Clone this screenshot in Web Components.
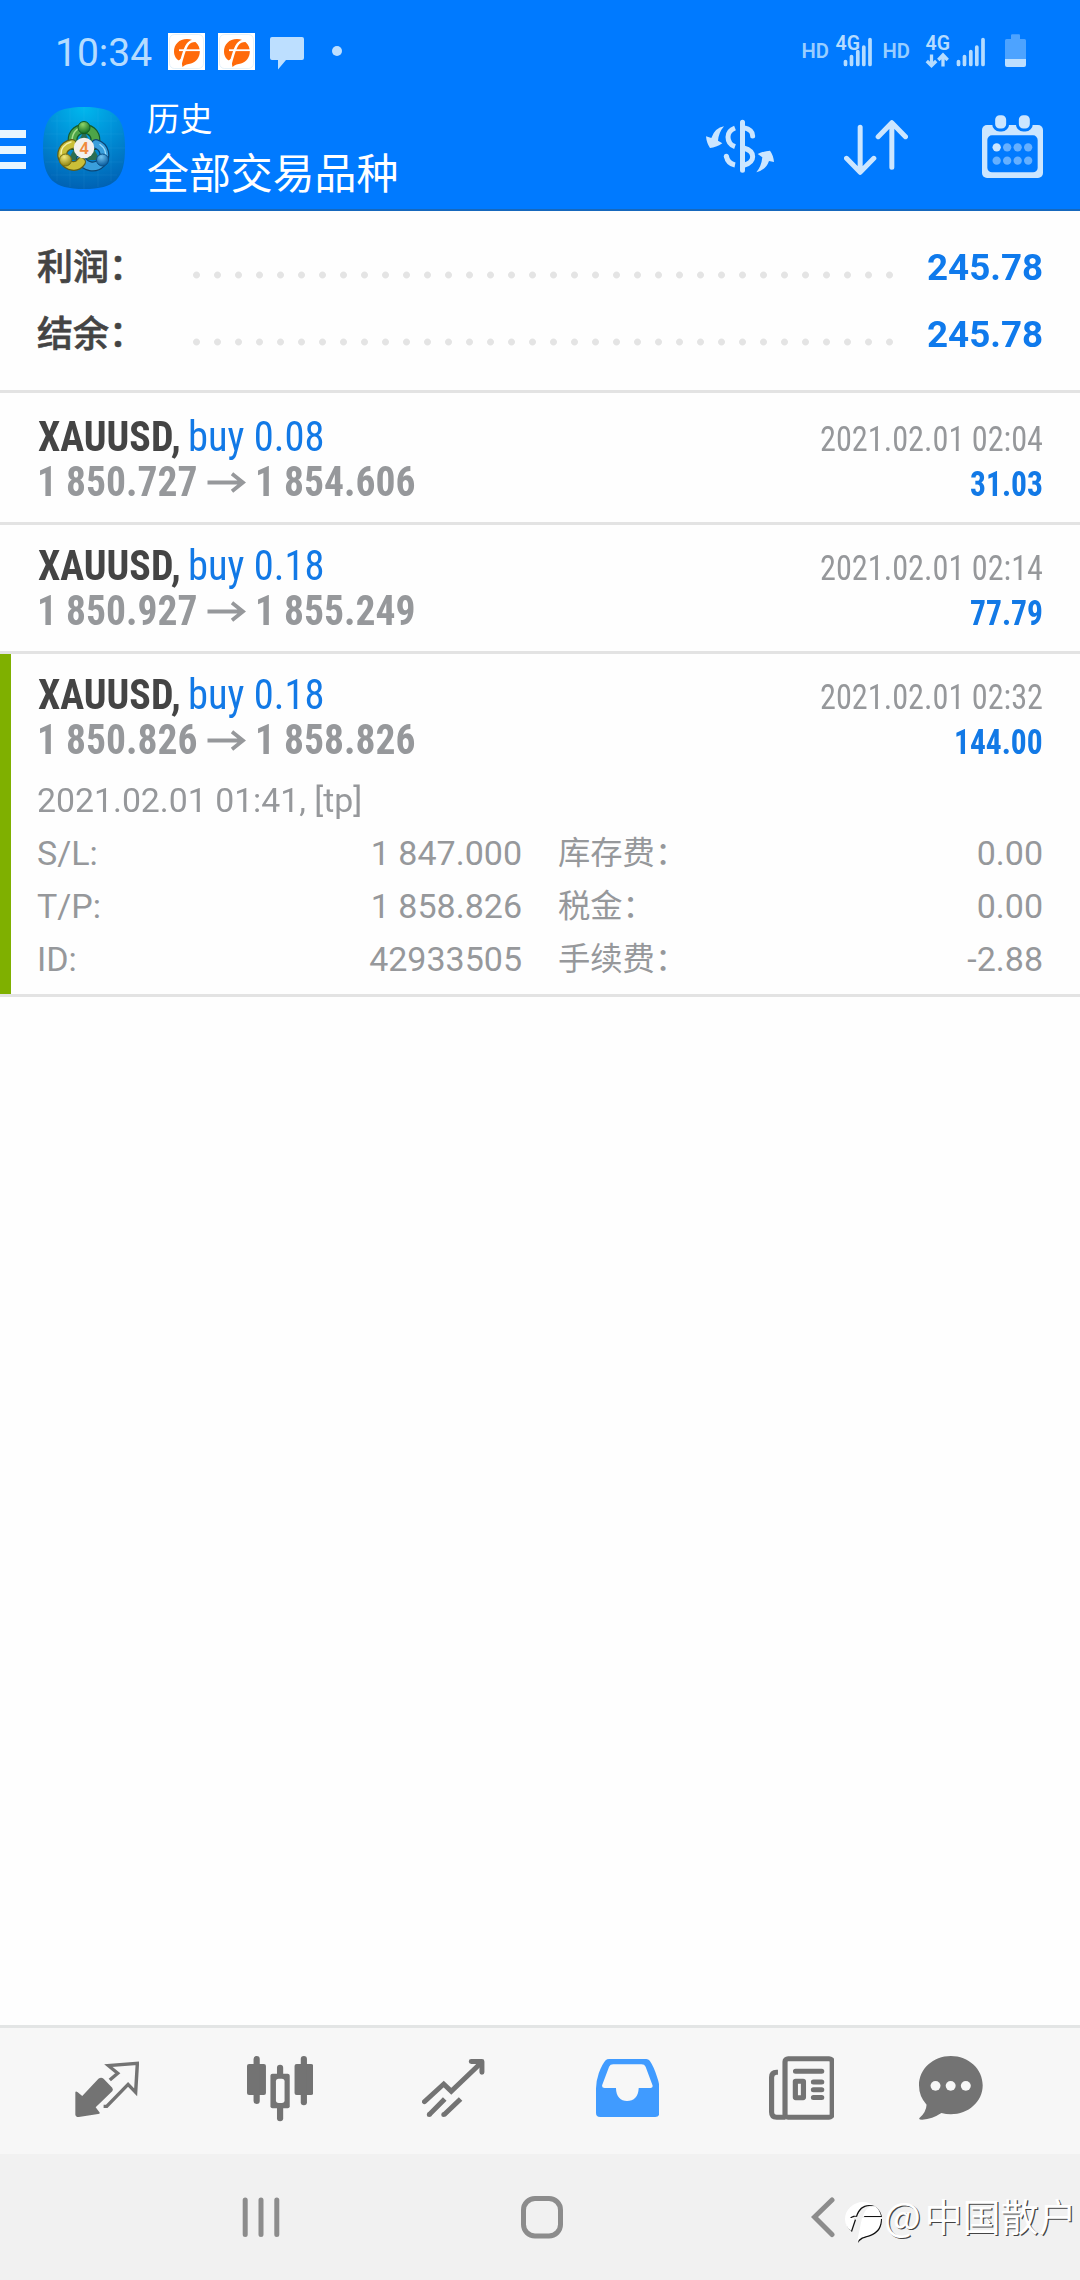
<!DOCTYPE html>
<html lang="zh">
<head>
<meta charset="utf-8">
<title>历史</title>
<style>
html,body{margin:0;padding:0;background:#fefefe}
body{width:1080px;height:2280px;overflow:hidden;font-family:Roboto,"Noto Sans CJK SC",sans-serif}
</style>
</head>
<body>
<mt-app></mt-app>
<script>
function define(name, markup, setup) {
  const tpl = document.createElement('template');
  tpl.innerHTML = markup;
  customElements.define(name, class extends HTMLElement {
    constructor() {
      super();
      this.attachShadow({ mode: 'open' }).appendChild(tpl.content.cloneNode(true));
    }
    connectedCallback() { if (setup) setup(this, this.shadowRoot); }
  });
}

/* Text squeezed or widened horizontally to the width given in "w". */
define('fit-text', `<style>
:host{display:inline-block;white-space:nowrap;font-stretch:75%}
span{display:inline-block;transform-origin:0 50%}
</style><span><slot></slot></span>`, (host, root) => {
  const w = parseFloat(host.getAttribute('w'));
  const span = root.querySelector('span');
  host.style.width = w + 'px';
  const fit = () => {
    const natural = span.offsetWidth;
    if (natural) span.style.transform = 'scaleX(' + w / natural + ')';
  };
  fit();
  requestAnimationFrame(fit);
});

define('news-badge', `<style>:host{display:block;width:37px;height:37px}svg{display:block}</style>
<svg width="37" height="37" viewBox="0 0 37 37"><rect width="37" height="37" fill="#fff"/><rect x="1.500" y="1.500" width="34" height="34" rx="5" fill="none" stroke="#d8ecf8" stroke-width=".7"/>
<path d="M19 6C11 6 6 11.500 6 18.500C6 23 8.500 26.500 11.500 28L13 26L14.500 34C17 31.500 20 31.300 23 30.500C28.500 29 31.800 24 31.800 18.500C31.800 11.500 26.500 6 19 6Z" fill="#ff6a0a"/>
<path d="M12.500 31C15 22 16.500 15.500 19.500 11.500C22 8 26 7.300 30 8" fill="none" stroke="#fff" stroke-width="2.500"/><path d="M11 17.200H32.500" stroke="#fff" stroke-width="1.800"/><path d="M10 28L13.500 25.500L14 34L10 34Z" fill="#fff"/></svg>`);

define('status-bar', `<style>
:host{display:flex;height:84px;align-items:flex-start;color:#b5dcff;box-sizing:border-box;padding:0 54px 0 55px}
.time{font-size:39px;line-height:60px;margin-top:23px;font-stretch:100%}
news-badge{margin:33px 0 0 13px}
.left,.right{display:flex}
.left news-badge:first-of-type{margin-left:16px}
.right{margin-left:auto}
svg{display:block}
</style>
<div class="left"><fit-text class="time" w="97">10:34</fit-text><news-badge></news-badge><news-badge></news-badge>
<svg width="100" height="84" viewBox="0 0 100 84"><path d="M17 37H47Q49 37 49 39V58Q49 60 47 60H31L23 69.500V60H17Q15 60 15 58V39Q15 37 17 37Z" fill="#bddfff"/><circle cx="82" cy="51" r="5" fill="#bddfff"/></svg></div>
<svg class="right" width="226" height="84" viewBox="800 0 226 84" fill="#b5dcff" font-family="Roboto" font-weight="600">
<text x="801.500" y="57.600" font-size="21" textLength="27.500" lengthAdjust="spacingAndGlyphs" fill="#99ceff">HD</text>
<text x="835.500" y="50" font-size="19.500" textLength="24.500" lengthAdjust="spacingAndGlyphs">4G</text>
<path d="M845.500 61.500V64.500M851.500 56.500V64.500M857.800 51.500V64.500M863.800 47V64.500M870 39.500V64.500" stroke="#b5dcff" stroke-width="3.700" stroke-linecap="round"/>
<text x="882.500" y="57.600" font-size="21" textLength="27.500" lengthAdjust="spacingAndGlyphs" fill="#99ceff">HD</text>
<text x="925.500" y="50" font-size="19.500" textLength="24.500" lengthAdjust="spacingAndGlyphs">4G</text>
<path d="M931.500 54.500V65M926.800 61L931.500 65.700L936.200 61M943 66.500V56M938.300 60L943 55L947.700 60" fill="none" stroke="#b5dcff" stroke-width="3.300"/>
<path d="M958.500 61.500V64.500M964.500 56.500V64.500M970.800 51.500V64.500M976.800 47V64.500M983 39.500V64.500" stroke="#b5dcff" stroke-width="3.700" stroke-linecap="round"/>
<path d="M1011 39V35.500Q1011 34.300 1012.200 34.300H1019Q1020 34.300 1020 35.500V39H1024.500Q1026 39 1026 40.500V60H1005V40.500Q1005 39 1006.500 39Z" fill="#4da3ff"/><path d="M1005 59H1026V65Q1026 67 1024 67H1007Q1005 67 1005 65Z" fill="#bddfff"/>
</svg>`);

define('app-logo', `<style>:host{display:block}svg{display:block}</style>
<svg width="82" height="82" viewBox="0 0 82 82"><defs>
<radialGradient id="bg" cx=".5" cy="0" r="1"><stop offset="0" stop-color="#00b8ee"/><stop offset=".45" stop-color="#0091d8"/><stop offset="1" stop-color="#0062b4"/></radialGradient>
<radialGradient id="g" cx=".4" cy=".25" r=".75"><stop offset="0" stop-color="#8fd468"/><stop offset="1" stop-color="#0f6e24"/></radialGradient>
<radialGradient id="y" cx=".4" cy=".25" r=".75"><stop offset="0" stop-color="#f4ea7c"/><stop offset="1" stop-color="#8f8410"/></radialGradient>
<radialGradient id="u" cx=".4" cy=".25" r=".75"><stop offset="0" stop-color="#74c4f0"/><stop offset="1" stop-color="#075a9c"/></radialGradient></defs>
<path d="M41 0C72 0 82 10 82 41C82 72 72 82 41 82C10 82 0 72 0 41C0 10 10 0 41 0Z" fill="url(#bg)"/>
<path d="M14 8V74M27 2V80M41 0V82M55 2V80M68 8V74M8 14H74M2 27H80M0 41H82M2 55H80M8 68H74" stroke="#6fd3ff" stroke-opacity=".12" stroke-width=".7"/>
<path d="M41 24L57 53H25Z" fill="#2b6d52"/>
<g fill="none" stroke-linecap="round">
<path d="M30 38C28 28 33 22 41 22C49 22 54 28 52 38" stroke="#145b2c" stroke-width="10"/><path d="M30 37C28 28 33 22 41 22C49 22 54 28 52 37" stroke="#4da548" stroke-width="7.500"/><path d="M29 34C29 26 34 20.500 40 20.500" stroke="#a6dd8e" stroke-width="1.500"/>
<path d="M53 37C62 40 64 50 58 56C52 62 42 60 38 52" stroke="#0b4675" stroke-width="10"/><path d="M53 37C62 40 64 50 58 56C52 62 42 60 38 52" stroke="#3a9fdc" stroke-width="7.500"/><path d="M57 37.500C62 41 63.500 46 62 51" stroke="#9bdcfb" stroke-width="1.500"/>
<path d="M29 37C20 39 17 47 21 53C25 60 34 61 38 55" stroke="#605f18" stroke-width="10"/><path d="M29 37C20 39 17 47 21 53C25 60 34 61 38 55" stroke="#cabf38" stroke-width="7.500"/><path d="M28 35C21 37 17.500 42 18 47" stroke="#f6f0a8" stroke-width="1.500"/></g>
<circle cx="41" cy="20.500" r="6" fill="url(#g)" stroke="#125c24"/><circle cx="22.500" cy="53" r="6" fill="url(#y)" stroke="#766e16"/><circle cx="59.500" cy="53" r="6" fill="url(#u)" stroke="#0b4f88"/>
<circle cx="41" cy="41" r="10.300" fill="#f2f0ee"/><text x="41" y="47" font-family="Roboto" font-weight="600" font-size="17" text-anchor="middle" fill="#f08a3c">4</text></svg>`);

define('app-header', `<style>
:host{display:block;background:#007aff;height:211px;box-sizing:border-box;border-bottom:2px solid #1668bd;color:#fff}
.bar{display:flex;align-items:flex-start}
svg{display:block}
.menu{display:flex;flex-direction:column;gap:8.300px;margin-top:46.300px;width:26px}.menu i{display:block;height:7.500px;background:#e8f6ff}
app-logo{margin:23px 0 0 17px}
.title{margin:11px auto 0 22px;line-height:50px;font-size:32.700px}
.title div+div{margin-top:5px;font-size:41.900px}
.tools{display:flex;padding-right:37px;gap:70px}.tools svg:last-child{margin-left:4px}
</style>
<status-bar></status-bar>
<div class="bar"><div class="menu"><i></i><i></i><i></i></div><app-logo></app-logo>
<div class="title"><div><slot name="title"></slot></div><div><slot name="subtitle"></slot></div></div>
<div class="tools">
<svg width="68" height="125" viewBox="198 252 204 375" fill="#cce6ff"><g fill="none" stroke="#cce6ff" stroke-width="15"><path d="M307.500 367V511M311 383C330 387 338 394 338 408" stroke-linecap="round"/><path d="M311 444C329 449 338 458 338 470C338 484 328 491 311 496"/><path d="M285 384C269 390 264 399 264 411C264 424 271 435 285 440"/><path d="M259 468C262 485 270 492 285 495"/></g><circle cx="259" cy="469" r="7.500"/>
<path d="M252 379Q225 383 214 414L198 409Q200 430 210 444Q228 443 247 430L234 422Q236 398 252 379Z"/><path d="M349 517Q364 500 367 472L353 462Q375 452 390 452Q400 465 402 486L387 483Q378 510 349 517Z"/></svg>
<svg width="64" height="125" viewBox="612 252 192 375"><path d="M660.500 382V515M619.500 475L660.500 517L701.500 475M755.500 502V370M714.500 410L755.500 368L796.500 410" fill="none" stroke="#cce6ff" stroke-width="15" stroke-linecap="round" stroke-linejoin="round"/></svg>
<svg width="61" height="125" viewBox="1026 252 183 375"><rect x="1026" y="375" width="183" height="159" rx="15" fill="#cce6ff"/><rect x="1042" y="406" width="151" height="111" rx="14" fill="#007aff"/><g fill="#cce6ff" stroke="#007aff" stroke-width="9"><rect x="1061" y="341" width="42" height="49" rx="18"/><rect x="1132" y="341" width="42" height="49" rx="18"/></g><circle cx="1070" cy="442" r="12.500" fill="#cce6ff"/><g fill="#66b0ff"><circle cx="1101.500" cy="442" r="12.500"/><circle cx="1133" cy="442" r="12.500"/><circle cx="1164.500" cy="442" r="12.500"/><circle cx="1070" cy="482" r="12.500"/><circle cx="1101.500" cy="482" r="12.500"/><circle cx="1133" cy="482" r="12.500"/><circle cx="1164.500" cy="482" r="12.500"/></g></svg>
</div></div>`);

define('summary-row', `<style>
:host{display:flex;height:67px;line-height:69px;padding:0 37px;font-weight:500;font-size:36px;color:#444}
.label{width:149px;white-space:nowrap;-webkit-text-stroke:.6px #444}
.dots{width:714px;height:8px;margin-top:36.500px;background:radial-gradient(circle at 50% 50%,#e4e4e4 3px,rgba(228,228,228,0) 3.900px) 0 0/21px 8px repeat-x}
fit-text{margin-left:auto;color:#0f7aec;font-weight:700;font-stretch:100%}
</style><div class="label"><slot></slot></div><div class="dots"></div><fit-text w="116.5"><slot name="value"></slot></fit-text>`);

define('deal-row', `<style>
:host{display:block;border-bottom:3px solid #e3e3e3;box-sizing:border-box;height:129px}
:host([first]){padding-top:3px;height:132px}
:host([open]){box-shadow:inset 11px 0 #7fb000;height:343px}
.head{display:flex;justify-content:space-between;padding:18px 37px 0;line-height:45px;font-size:42px;white-space:nowrap;height:90px}
.sym{font-weight:700;color:#444;margin-left:.5px}.side{color:#1279e6;margin-left:8px}
.prices{display:flex;color:#96989b;font-weight:700}
.prices svg{display:block;margin:0 9px 0 10px}
.right{text-align:right;font-size:35px;color:#96989b;padding-top:3px}
.profit{color:#1279e6;font-weight:700}
fit-text{display:inline-block;vertical-align:top}
</style>
<div class="head"><div><div><fit-text class="sym" w="142.5"><slot name="symbol"></slot></fit-text><fit-text class="side" w="136"><slot name="side"></slot></fit-text></div>
<div class="prices"><fit-text w="160"><slot name="open"></slot></fit-text><svg width="39" height="45" viewBox="0 0 39 45"><path d="M.5 23.500H36M25 14.800L36 23.500L25 32.300" fill="none" stroke="#96989b" stroke-width="3.800"/></svg><fit-text w="160"><slot name="close"></slot></fit-text></div></div>
<div class="right"><div><fit-text w="223"><slot name="time"></slot></fit-text></div><div class="profit"><fit-text class="p"><slot name="profit"></slot></fit-text></div></div></div>
<slot></slot>`, (host, root) => {
  const el = root.querySelector('.p');
  el.setAttribute('w', host.getAttribute('pw') || 73);
  el.connectedCallback();
});

define('deal-details', `<style>
:host{display:block;margin-top:12px;padding:0 37px;font-size:34px;line-height:53px;color:#96989b}
.grid{display:grid;grid-template-columns:1fr 1fr;column-gap:36px}
.opened{margin-top:0}
</style><fit-text class="opened" w="325" style="font-stretch:100%;vertical-align:top"><slot name="opened"></slot></fit-text><div class="grid"><slot></slot></div>`);

define('detail-item', `<style>
:host{display:flex;justify-content:space-between;height:53px}
:host([cjk]) .l{font-size:32.300px}
</style><span class="l"><slot></slot></span><span><slot name="value"></slot></span>`);

define('tab-bar', `<style>
:host{display:flex;box-sizing:border-box;height:129px;border-top:3px solid #e3e5e5;background:#f7f7f7;padding-left:21.200px}
div{display:flex;justify-content:center;width:173px}svg{display:block;height:126px}
div:nth-of-type(1){width:172.500px}div:nth-of-type(4){width:175.600px}div:nth-of-type(5){width:172.600px}div:nth-of-type(6){width:126.200px}
</style>
<div><svg width="64.100" viewBox="219 54 186 378" preserveAspectRatio="none"><path d="M220 247Q221 242 227 247L240 258L287 206Q295 200 302 206L327 233Q331 239 327 244L279 292L291 308Q291 312 286 312L230 321Q221 321 220 314Z" fill="#737373"/><path d="M320 210L343 190L316 167L400 160L395 247L373 223L311 289H302" fill="none" stroke="#737373" stroke-width="10"/></svg></div>
<div><svg width="66.500" viewBox="717 54 193 378" preserveAspectRatio="none" fill="#737373"><rect x="717" y="162" width="55" height="93" rx="6"/><rect x="736" y="138" width="18" height="144" rx="9"/><rect x="804" y="164" width="18" height="170" rx="9"/><rect x="785" y="191" width="56" height="104" rx="6"/><rect x="801" y="206" width="25" height="73" rx="8" fill="#f7f7f7"/><rect x="855" y="162" width="54" height="93" rx="6"/><rect x="873" y="138" width="18" height="148" rx="9"/></svg></div>
<div><svg width="62.700" viewBox="1225 54 182 378" preserveAspectRatio="none" fill="none" stroke="#737373" stroke-width="14.500"><path d="M1232 275L1288 222L1310 244L1396 159" stroke-linecap="round"/><path d="M1368 154.500H1399V187" stroke-linecap="round" stroke-linejoin="round"/><path d="M1246 314L1291 267M1289 314L1337 267"/><path d="M1246 314h.1M1288 314h.1" stroke-linecap="round"/></svg></div>
<div><svg width="63.400" viewBox="162 54 184 378" preserveAspectRatio="none"><path fill="#409bff" fill-rule="evenodd" d="M162 235Q162 215 170 190Q180 162 190 151Q194 147 200 147H308Q314 147 318 152Q330 170 339 200Q346 220 346 235V309Q346 321 334 321H174Q162 321 162 309ZM212 163Q203 163 200 170L180 225Q178 234 187 234H220C220 260 234 273 252 273C272 273 285 260 286 234H320Q328 234 326 226L306 170Q303 163 294 163Z"/></svg></div>
<div><svg width="65.800" viewBox="664 54 191 378" preserveAspectRatio="none" fill="none" stroke="#737373" stroke-width="15"><rect x="710.500" y="146" width="137" height="175.500" rx="9"/><path d="M690 187H686Q671.500 187 671.500 202V306Q671.500 321.500 686 321.500H712"/><rect x="740.500" y="213.500" width="23.500" height="49.500" rx="1"/><path d="M741 184H817M793 216H817M793 239H817M793 262.500H817" stroke-linecap="round"/></svg></div>
<div><svg width="63.700" viewBox="1101 54 185 378" preserveAspectRatio="none"><path d="M1193.500 138C1245 138 1286 177 1286 226C1286 275 1245 313 1193.500 313Q1180 313 1166 309Q1140 327 1110 329Q1098 329 1103 323Q1122 306 1123 284Q1101 260 1101 226C1101 177 1142 138 1193.500 138Z" fill="#737373"/><g fill="#f7f7f7"><circle cx="1149" cy="227.500" r="14.500"/><circle cx="1193" cy="227.500" r="14.500"/><circle cx="1237" cy="227.500" r="14.500"/></g></svg></div>`);

define('nav-bar', `<style>
:host{display:flex;height:126px;background:#f1f1f1;justify-content:center;padding-left:4px;box-sizing:border-box}
div{width:281px;display:flex;justify-content:center}svg{display:block}
</style>
<div><svg width="38" height="126" viewBox="0 0 38 126" stroke="#8c8c8c" stroke-width="5" stroke-linecap="round"><path d="M3.200 46V80.500M19 46V80.500M34.800 46V80.500"/></svg></div>
<div><svg width="42" height="126" viewBox="0 0 42 126"><rect x="2.500" y="44.500" width="37" height="37.500" rx="11.500" fill="none" stroke="#8c8c8c" stroke-width="5"/></svg></div>
<div><svg width="24" height="126" viewBox="0 0 24 126"><path d="M21 46L3.500 63L21 80.500" fill="none" stroke="#8c8c8c" stroke-width="5" stroke-linecap="round"/></svg></div>`);

define('water-mark', `<style>
:host{position:absolute;left:845px;top:2190px;display:flex;color:#fff;font-size:38px;line-height:56px;white-space:nowrap;font-family:"Noto Sans CJK SC",sans-serif;font-weight:400;text-shadow:1.200px 1.200px .5px #444}
svg{display:block;margin-right:2px;filter:drop-shadow(1px 1px .3px #111)}
span{margin-top:-4px}
span::first-letter{letter-spacing:4px}
</style><svg width="37" height="58" viewBox="0 0 37 58"><path fill="#fff" d="M18 12C8 12 0 20 0 29C0 34 2 38 6 41L10 29C8 27 7 28 5 28C8 25 10 26 11 26C14 17 20 13 30 16C23 16 20 20 18 26H36C35 19 28 12 18 12ZM17 28L12 52C16 46 21 47 27 44C33 41 36 36 36 28Z"/></svg><span><slot></slot></span>`);

define('mt-app', `<style>
:host{display:flex;flex-direction:column;position:relative;width:1080px;height:2280px;background:#fefefe}
.summary{padding:23px 0 22px;border-bottom:3px solid #e3e3e3}
.grow{flex:1}
.at{display:inline-block;width:40.500px;font-size:39px}
</style>
<app-header><span slot="title">历史</span><span slot="subtitle">全部交易品种</span></app-header>
<div class="summary"><summary-row>利润：<span slot="value">245.78</span></summary-row><summary-row>结余：<span slot="value">245.78</span></summary-row></div>
<deal-row first><span slot="symbol">XAUUSD,</span><span slot="side">buy 0.08</span><span slot="open">1 850.727</span><span slot="close">1 854.606</span><span slot="time">2021.02.01 02:04</span><span slot="profit">31.03</span></deal-row>
<deal-row><span slot="symbol">XAUUSD,</span><span slot="side">buy 0.18</span><span slot="open">1 850.927</span><span slot="close">1 855.249</span><span slot="time">2021.02.01 02:14</span><span slot="profit">77.79</span></deal-row>
<deal-row open pw="89"><span slot="symbol">XAUUSD,</span><span slot="side">buy 0.18</span><span slot="open">1 850.826</span><span slot="close">1 858.826</span><span slot="time">2021.02.01 02:32</span><span slot="profit">144.00</span>
<deal-details><span slot="opened">2021.02.01 01:41, [tp]</span>
<detail-item>S/L:<span slot="value">1 847.000</span></detail-item><detail-item cjk>库存费：<span slot="value">0.00</span></detail-item>
<detail-item>T/P:<span slot="value">1 858.826</span></detail-item><detail-item cjk>税金：<span slot="value">0.00</span></detail-item>
<detail-item>ID:<span slot="value">42933505</span></detail-item><detail-item cjk>手续费：<span slot="value">-2.88</span></detail-item></deal-details></deal-row>
<div class="grow"></div>
<tab-bar></tab-bar><nav-bar></nav-bar>
<water-mark><span class="at">@</span>中国散户</water-mark>`);
</script>
</body>
</html>
